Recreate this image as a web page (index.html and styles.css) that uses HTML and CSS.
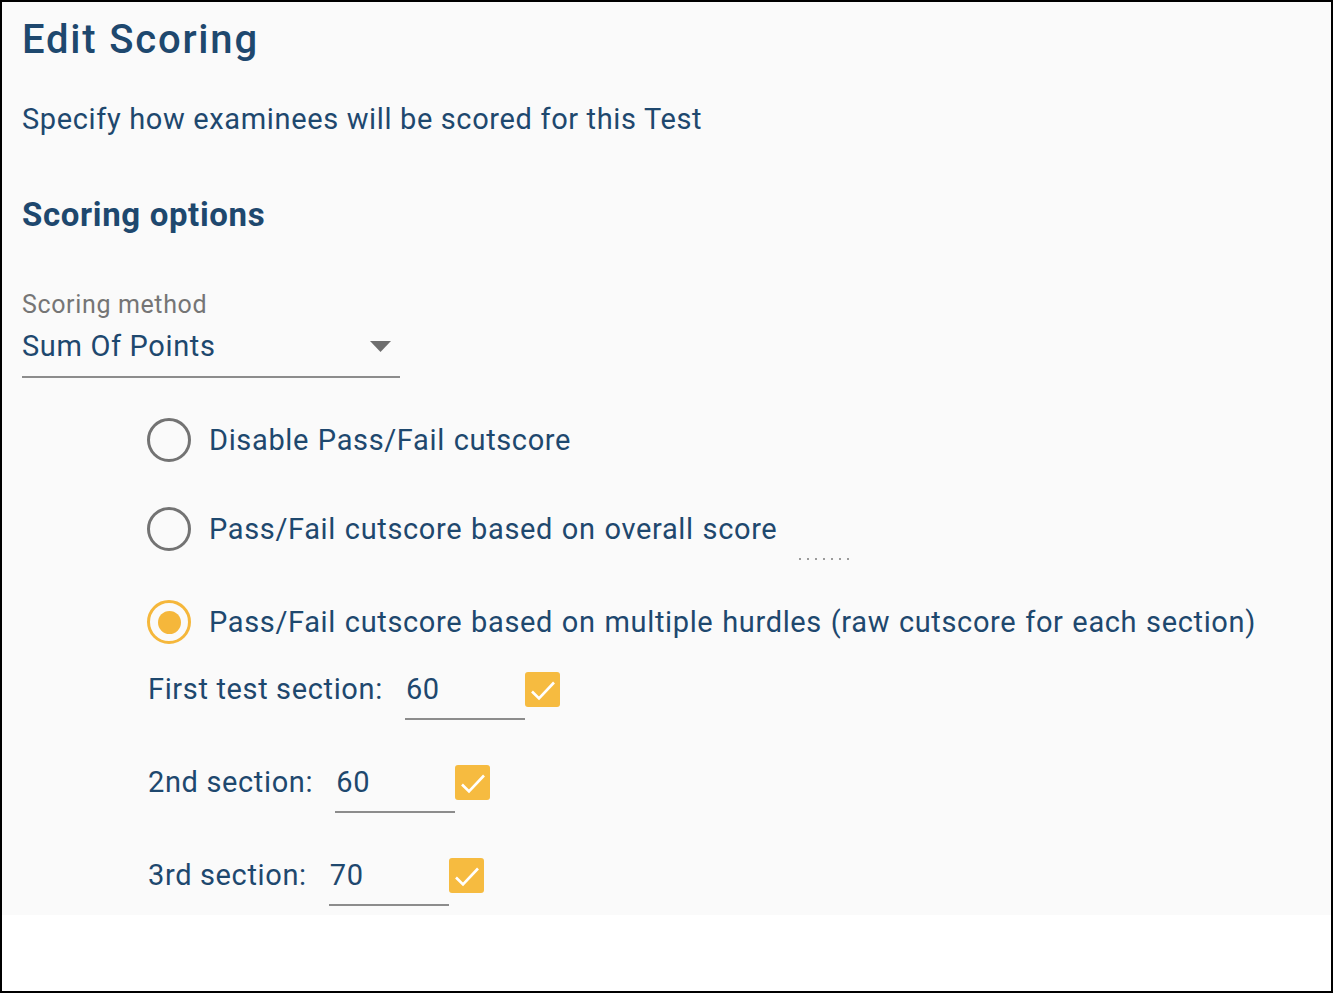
FILE: index.html
```html
<!DOCTYPE html>
<html lang="en">
<head>
<meta charset="utf-8">
<title>Edit Scoring</title>
<link rel="stylesheet" href="styles.css">
</head>
<body>
<div class="frame">
  <div class="panel">
    <h1 class="title">Edit Scoring</h1>
    <p class="subtitle">Specify how examinees will be scored for this Test</p>
    <h2 class="heading">Scoring options</h2>

    <div class="field">
      <div class="field-label">Scoring method</div>
      <div class="select">
        <span class="select-value">Sum Of Points</span>
        <svg class="select-arrow" width="21" height="11" viewBox="0 0 21 11"><path d="M0 0 L21 0 L10.5 11 Z" fill="#6e6e6e"/></svg>
      </div>
    </div>

    <div class="options">
      <div class="radio-row row-1">
        <span class="radio"></span>
        <span class="radio-label">Disable Pass/Fail cutscore</span>
      </div>
      <div class="radio-row row-2">
        <span class="radio"></span>
        <span class="radio-label">Pass/Fail cutscore based on overall score</span>
        <span class="hidden-input"></span>
      </div>
      <div class="radio-row row-3">
        <span class="radio checked"><span class="dot"></span></span>
        <span class="radio-label">Pass/Fail cutscore based on multiple hurdles (raw cutscore for each section)</span>
      </div>

      <div class="sections">
        <div class="sec-row">
          <span class="sec-label">First test section:</span>
          <span class="sec-input">60</span>
          <span class="check"><svg width="35" height="35" viewBox="0 0 35 35"><path d="M7 19.5 L14 26.5 L29 10.5" fill="none" stroke="#fff" stroke-width="2.6"/></svg></span>
        </div>
        <div class="sec-row">
          <span class="sec-label">2nd section:</span>
          <span class="sec-input">60</span>
          <span class="check"><svg width="35" height="35" viewBox="0 0 35 35"><path d="M7 19.5 L14 26.5 L29 10.5" fill="none" stroke="#fff" stroke-width="2.6"/></svg></span>
        </div>
        <div class="sec-row">
          <span class="sec-label">3rd section:</span>
          <span class="sec-input">70</span>
          <span class="check"><svg width="35" height="35" viewBox="0 0 35 35"><path d="M7 19.5 L14 26.5 L29 10.5" fill="none" stroke="#fff" stroke-width="2.6"/></svg></span>
        </div>
      </div>
    </div>
  </div>
</div>
</body>
</html>
```
FILE: styles.css
```css
* { box-sizing: border-box; }
html, body { margin: 0; padding: 0; }
body {
  width: 1333px;
  height: 993px;
  font-family: Roboto, "Liberation Sans", Arial, sans-serif;
  color: #1e486e;
  background: #fff;
  letter-spacing: 0.04em;
}
.frame {
  width: 1333px;
  height: 993px;
  border: 2px solid #000;
  background: #fff;
}
.panel {
  background: #fafafa;
  padding: 14px 20px 9px 20px;
}
.title {
  margin: 0;
  font-size: 40px;
  line-height: 48px;
  font-weight: 500;
  letter-spacing: 0.045em;
}
.subtitle {
  margin: 38px 0 0 0;
  font-size: 29px;
  line-height: 34px;
}
.heading {
  margin: 60px 0 0 0;
  font-size: 33px;
  line-height: 38px;
  font-weight: 700;
}
.field {
  margin-top: 57px;
  width: 378px;
}
.field-label {
  font-size: 25px;
  line-height: 28px;
  color: #757575;
}
.select {
  margin-top: 10px;
  display: flex;
  align-items: center;
  padding-bottom: 13px;
  border-bottom: 2px solid #8c8c8c;
}
.select-value {
  flex: 1;
  font-size: 29px;
  line-height: 34px;
}
.select-arrow {
  margin-right: 9px;
}
.options {
  margin-left: 125px;
}
.radio-row {
  display: flex;
  align-items: center;
  height: 44px;
}
.row-1 { margin-top: 40px; }
.row-2 { margin-top: 45px; }
.row-3 { margin-top: 49px; }
.radio {
  width: 44px;
  height: 44px;
  border-radius: 50%;
  border: 3.5px solid #737373;
  display: flex;
  align-items: center;
  justify-content: center;
  flex: none;
}
.radio.checked {
  border-color: #f5b73b;
}
.dot {
  width: 23px;
  height: 23px;
  border-radius: 50%;
  background: #f5b73b;
}
.radio-label {
  margin-left: 18px;
  font-size: 29px;
  line-height: 34px;
  word-spacing: 1px;
}
.hidden-input {
  align-self: flex-end;
  margin-left: 22px;
  margin-bottom: -9px;
  width: 50px;
  height: 2px;
  background: repeating-linear-gradient(90deg, #9b9b9b 0 2px, transparent 2px 8px);
}
.sections {
  margin-left: 1px;
  margin-top: 28px;
}
.sec-row {
  display: flex;
  align-items: flex-start;
  margin-bottom: 45px;
}
.sec-row:last-child { margin-bottom: 0; }
.sec-label {
  font-size: 29px;
  line-height: 34px;
}
.sec-input {
  margin-left: 22px;
  width: 120px;
  padding-left: 1px;
  padding-bottom: 12px;
  font-size: 29px;
  line-height: 34px;
  border-bottom: 2px solid #8c8c8c;
}
.check {
  width: 35px;
  height: 35px;
  border-radius: 3px;
  background: #f6bb40;
  flex: none;
}
.check svg { display: block; }
```
